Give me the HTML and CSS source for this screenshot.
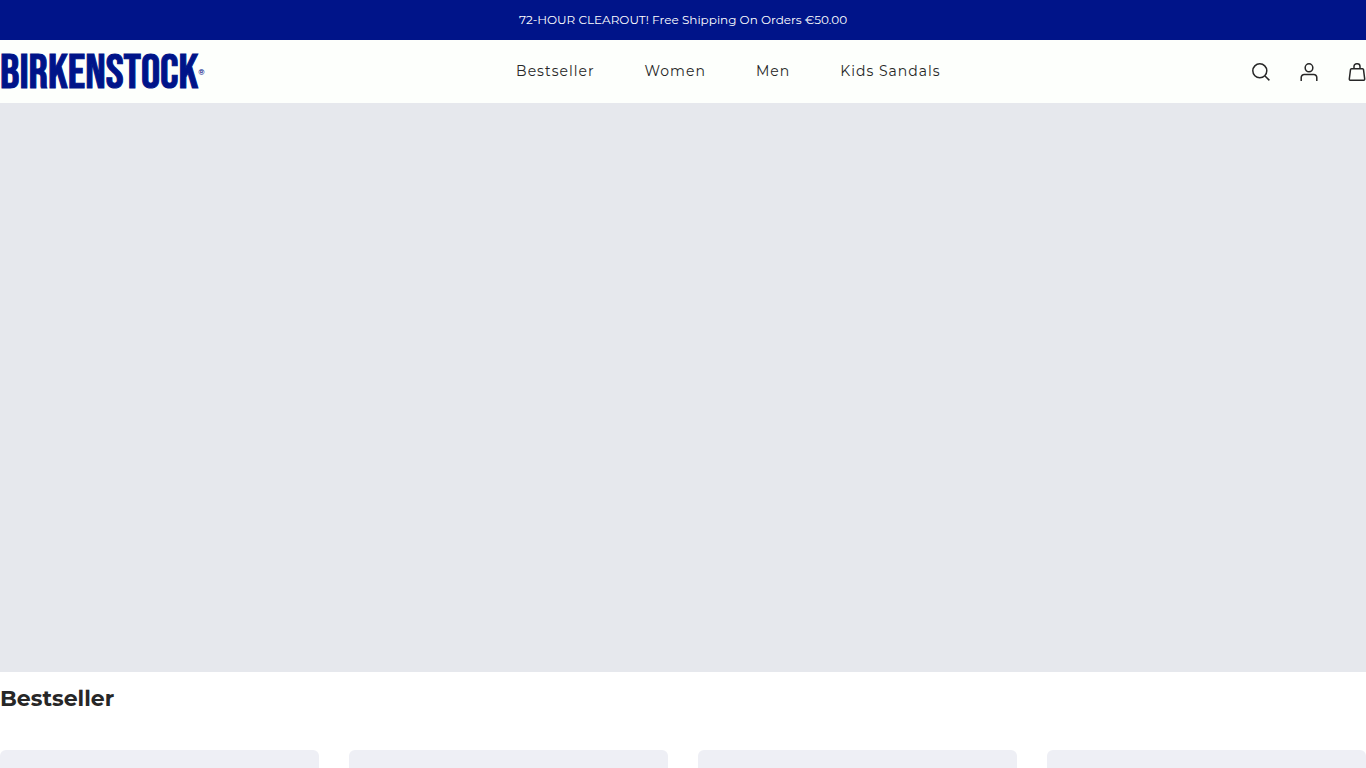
FILE: index.html
```html
<!DOCTYPE html>
<html lang="en">
<head>
<meta charset="utf-8">
<meta name="viewport" content="width=device-width, initial-scale=1">
<title>Birkenstock</title>
<link rel="stylesheet" href="styles.css">
</head>
<body>
<p class="announcement">72-HOUR CLEAROUT! Free Shipping On Orders €50.00</p>
<header class="header">
  <a class="logo" href="#"><span class="logo-name">BIRKENSTOCK</span><span class="logo-mark">®</span></a>
  <nav class="nav" aria-label="Main">
    <a href="#">Bestseller</a>
    <a href="#">Women</a>
    <a href="#">Men</a>
    <a href="#">Kids Sandals</a>
  </nav>
  <div class="actions">
    <button type="button" aria-label="Search">
      <svg viewBox="0 0 18 18"><circle cx="7.8" cy="7.8" r="7"/><path d="M13 13l4.4 4.4"/></svg>
    </button>
    <button type="button" aria-label="Account">
      <svg viewBox="0 0 18 18"><rect x="5.2" y=".8" width="7.6" height="8" rx="3.8"/><path d="M1.2 18v-3.500a3 3 0 0 1 3-3h9.600a3 3 0 0 1 3 3V18"/></svg>
    </button>
    <button type="button" aria-label="Cart">
      <svg viewBox="0 0 18 18"><path d="M3.500 5.800h11a1 1 0 0 1 1 .9l1.200 9.300a1.200 1.200 0 0 1-1.200 1.300h-13a1.200 1.200 0 0 1-1.200-1.300l1.200-9.300a1 1 0 0 1 1-.9z"/><path d="M6 5.800V3.500a2.700 2.700 0 0 1 2.700-2.700h.6A2.700 2.700 0 0 1 12 3.500v2.300"/></svg>
    </button>
  </div>
</header>
<main>
  <div class="hero"></div>
  <section class="products">
    <h2>Bestseller</h2>
    <div class="grid">
      <div class="card"></div>
      <div class="card"></div>
      <div class="card"></div>
      <div class="card"></div>
    </div>
  </section>
</main>
</body>
</html>
```

FILE: styles.css
```css
* { box-sizing: border-box; }
body {
  margin: 0;
  background: #fff;
  color: #272727;
  font-family: Montserrat, Inter, sans-serif;
}
a { color: inherit; text-decoration: none; }
.announcement {
  margin: 0;
  padding: 10px;
  background: #001489;
  color: #fff;
  font-size: 12px;
  line-height: 20px;
  text-align: center;
}
.header {
  display: flex;
  justify-content: space-between;
  align-items: center;
  min-height: 63px;
  background: #fdfffc;
}
.logo {
  display: flex;
  align-items: center;
  color: #001489;
}
.logo-name {
  padding-top: 4px;
  font-family: "Bebas Neue", "League Gothic", "Open Sans Condensed", sans-serif;
  font-size: 48px;
  font-weight: 400;
  line-height: 40px;
  -webkit-text-stroke: 1px currentColor;
}
.logo-mark { font-size: 8px; font-weight: 600; line-height: 8px; }
.nav {
  display: flex;
  gap: 50px;
  padding-bottom: 2px;
  font-size: 14px;
  line-height: 20px;
  letter-spacing: 1px;
}
.actions { display: flex; gap: 30px; }
.actions button {
  width: 18px;
  height: 18px;
  padding: 0;
  border: 0;
  background: none;
  color: #272727;
}
.actions svg {
  display: block;
  width: 100%;
  fill: none;
  stroke: currentColor;
  stroke-width: 1.5;
}
.hero { background: #e6e8ed; aspect-ratio: 12 / 5; }
.products h2 {
  margin: 0;
  padding: 12px 0 36px;
  font-size: 22px;
  line-height: 30px;
}
.grid {
  display: grid;
  grid-template-columns: repeat(4, 1fr);
  gap: 30px;
}
.card {
  aspect-ratio: 3 / 4;
  border-radius: 6px;
  background: #eeeff5;
}
```
